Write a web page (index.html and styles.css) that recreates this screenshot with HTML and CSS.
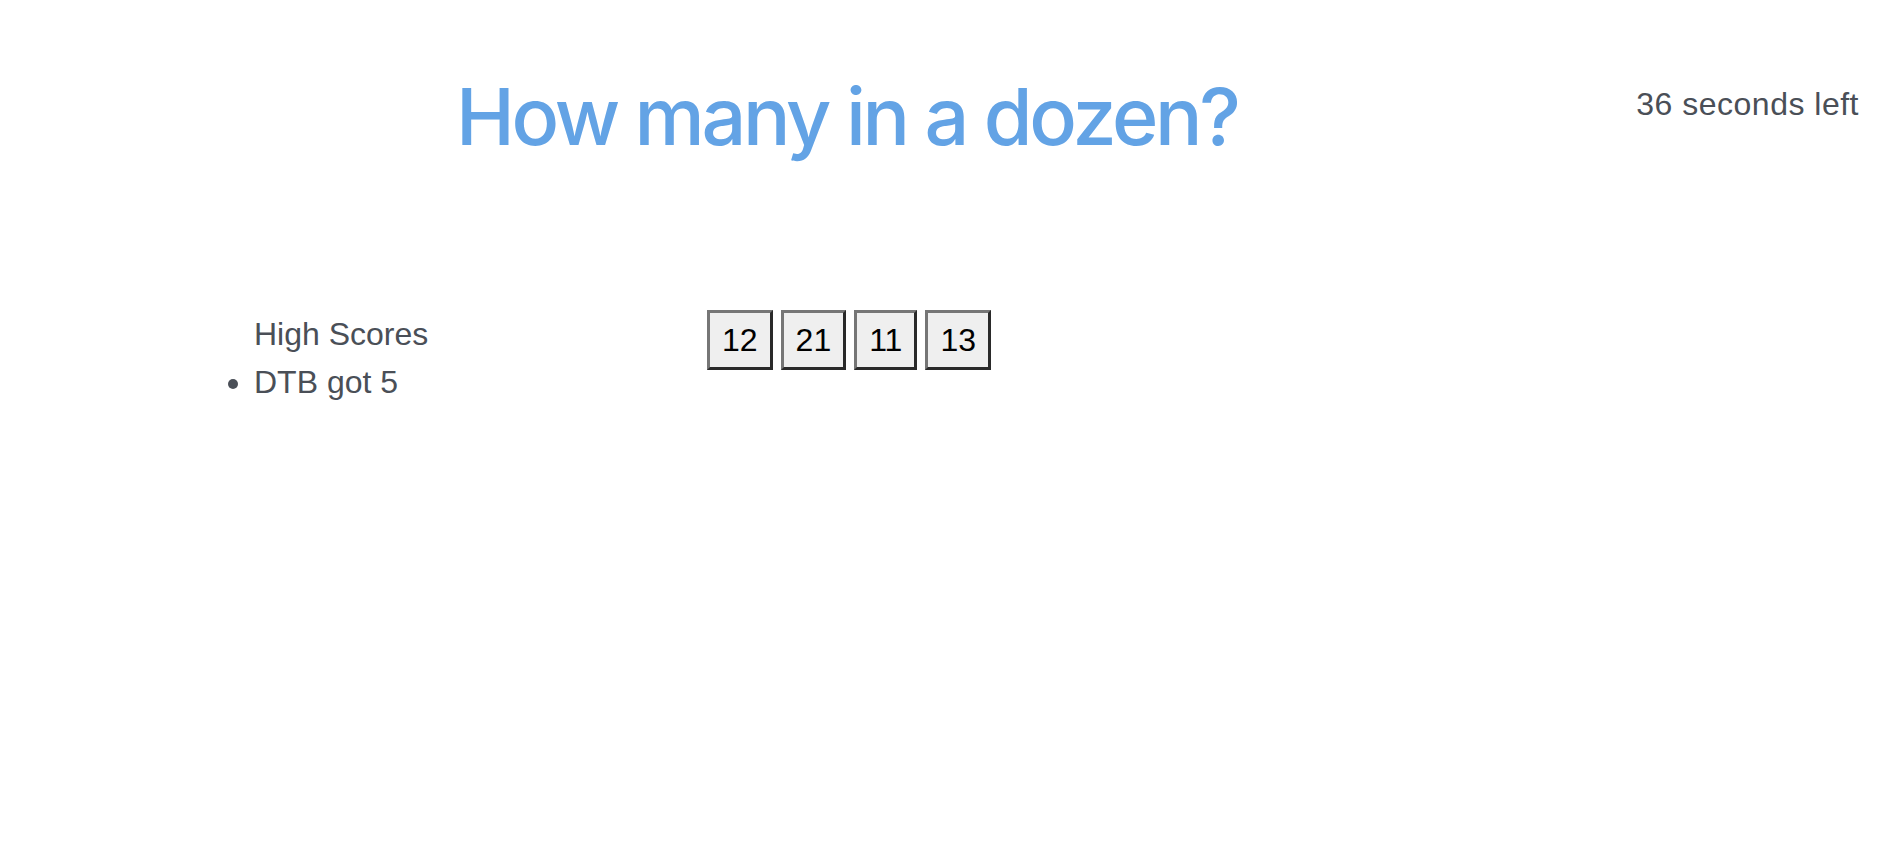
FILE: index.html
```html
<!DOCTYPE html>
<html lang="en">
<head>
<meta charset="utf-8">
<title>Quiz</title>
<link rel="stylesheet" href="styles.css">
</head>
<body>
<header class="top">
  <h1 class="question">How many in a dozen?</h1>
  <div class="timer">36 seconds left</div>
</header>
<main class="game">
  <ul class="scores">
    <li class="scores-title">High Scores</li>
    <li>DTB got 5</li>
  </ul>
  <div class="answers">
    <button class="answer">12</button>
    <button class="answer">21</button>
    <button class="answer">11</button>
    <button class="answer">13</button>
  </div>
</main>
</body>
</html>
```

FILE: styles.css
```css
html, body {
  margin: 0;
  padding: 0;
  background: #ffffff;
}

body {
  font-family: "Liberation Sans", Arial, sans-serif;
  color: #4a4f57;
  width: 1880px;
  height: 868px;
}

.top {
  display: flex;
  justify-content: space-between;
  align-items: flex-start;
  padding: 70px 21px 0 456px;
}

.question {
  margin: 0;
  font-family: Inter, "Liberation Sans", sans-serif;
  font-size: 79px;
  line-height: 92px;
  font-weight: 500;
  letter-spacing: -3.3px;
  color: #63a3e5;
}

.timer {
  margin-top: 10px;
  font-size: 32px;
  line-height: 48px;
  letter-spacing: 0.5px;
}

.game {
  display: grid;
  grid-template-columns: 493px auto;
  align-items: start;
  margin-top: 148px;
  padding-left: 214px;
}

.scores {
  margin: 0;
  padding-left: 40px;
  font-size: 32px;
  line-height: 48px;
}

.scores-title {
  list-style: none;
}

.answers {
  display: flex;
  gap: 8px;
}

.answer {
  font-family: "Liberation Sans", Arial, sans-serif;
  font-size: 32px;
  line-height: 38px;
  padding: 8px 12px;
  margin: 0;
  color: #000000;
  background: #efefef;
  border: 3px solid;
  border-color: #767676 #2a2a2a #2a2a2a #767676;
  border-radius: 0;
}
```
